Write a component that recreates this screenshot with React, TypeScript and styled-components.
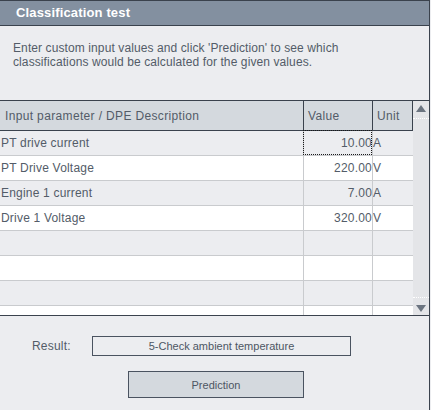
import React from 'react';
import styled, { createGlobalStyle } from 'styled-components';

const GlobalStyle = createGlobalStyle`
  html, body {
    margin: 0;
    padding: 0;
    background: #ecedf0;
  }
  body {
    font-family: "Liberation Sans", Arial, sans-serif;
    color: #4d5663;
  }
`;

type Row = { name: string; value: string; unit: string };

const rows: Row[] = [
  { name: 'PT drive current', value: '10.00', unit: 'A' },
  { name: 'PT Drive Voltage', value: '220.00', unit: 'V' },
  { name: 'Engine 1 current', value: '7.00', unit: 'A' },
  { name: 'Drive 1 Voltage', value: '320.00', unit: 'V' },
  { name: '', value: '', unit: '' },
  { name: '', value: '', unit: '' },
  { name: '', value: '', unit: '' },
  { name: '', value: '', unit: '' },
];

export default function App() {
  return (
    <>
      <GlobalStyle />
      <Panel>
        <TitleBar>Classification test</TitleBar>
        <Description>
          Enter custom input values and click 'Prediction' to see which
          <br />
          classifications would be calculated for the given values.
        </Description>

        <Table>
          <Grid>
            <HeadCell>Input parameter / DPE Description</HeadCell>
            <HeadCell>Value</HeadCell>
            <HeadCell>Unit</HeadCell>
            {rows.map((row, i) => (
              <React.Fragment key={i}>
                <Cell odd={i % 2 === 0}>{row.name}</Cell>
                <ValueCell odd={i % 2 === 0} focused={i === 0}>
                  {row.value}
                </ValueCell>
                <UnitCell odd={i % 2 === 0}>{row.unit}</UnitCell>
              </React.Fragment>
            ))}
          </Grid>
          <ScrollBar>
            <ArrowBtn>
              <svg width="10" height="7" viewBox="0 0 10 7">
                <polygon points="5,0 10,7 0,7" fill="#6b7480" />
              </svg>
            </ArrowBtn>
            <ArrowBtn bottom>
              <svg width="10" height="7" viewBox="0 0 10 7">
                <polygon points="0,0 10,0 5,7" fill="#6b7480" />
              </svg>
            </ArrowBtn>
          </ScrollBar>
        </Table>

        <ResultRow>
          <ResultLabel>Result:</ResultLabel>
          <ResultBox>5-Check ambient temperature</ResultBox>
        </ResultRow>
        <ButtonRow>
          <PredictButton>Prediction</PredictButton>
        </ButtonRow>
      </Panel>
    </>
  );
}

const Panel = styled.div`
  width: 429px;
  height: 410px;
  border-right: 1px solid #3a424d;
  background: #ecedf0;
  display: flex;
  flex-direction: column;
`;

const TitleBar = styled.div`
  height: 24px;
  border-top: 1px solid #3a424d;
  border-bottom: 1px solid #3a424d;
  background: #8390a0;
  color: #ffffff;
  font-weight: bold;
  font-size: 13px;
  line-height: 24px;
  padding-left: 16px;
  letter-spacing: 0.15px;
`;

const Description = styled.div`
  margin-top: 15px;
  padding-left: 13px;
  font-size: 12px;
  line-height: 14px;
  letter-spacing: 0.1px;
  color: #535c68;
`;

const Table = styled.div`
  margin-top: 31px;
  height: 214px;
  border-top: 1px solid #3a424d;
  border-bottom: 1px solid #3a424d;
  display: flex;
  overflow: hidden;
`;

const Grid = styled.div`
  display: grid;
  grid-template-columns: 304px 69px 40px;
  grid-auto-rows: 25px;
  grid-template-rows: 30px;
  align-content: start;
  width: 413px;
`;

const HeadCell = styled.div`
  background: #d4d9de;
  border-bottom: 1px solid #3a424d;
  border-right: 1px solid #3a424d;
  font-size: 12px;
  letter-spacing: 0.35px;
  color: #535c68;
  display: flex;
  align-items: center;
  padding-left: 4px;
  &:first-child {
    padding-left: 5px;
  }
`;

const Cell = styled.div<{ odd: boolean }>`
  background: ${({ odd }) => (odd ? '#ecedf0' : '#ffffff')};
  border-bottom: 1px solid #c9cbce;
  border-right: 1px solid #c9cbce;
  font-size: 12px;
  letter-spacing: 0.2px;
  color: #535c68;
  display: flex;
  align-items: center;
  padding-left: 1px;
  white-space: nowrap;
`;

const ValueCell = styled(Cell)<{ focused?: boolean }>`
  justify-content: flex-end;
  padding-left: 0;
  padding-right: 0;
  position: relative;
  &::after {
    content: '';
    display: ${({ focused }) => (focused ? 'block' : 'none')};
    position: absolute;
    left: -1px;
    top: -1px;
    right: 0;
    bottom: 0;
    border: 1px dotted #1a1a1a;
  }
`;

const UnitCell = styled(Cell)`
  border-right: none;
  padding-left: 0;
`;

const ScrollBar = styled.div`
  width: 16px;
  background: #e4e5e8;
  display: flex;
  flex-direction: column;
  justify-content: space-between;
`;

const ArrowBtn = styled.div<{ bottom?: boolean }>`
  height: 18px;
  display: flex;
  justify-content: center;
  align-items: ${({ bottom }) => (bottom ? 'flex-end' : 'flex-start')};
  padding: ${({ bottom }) => (bottom ? '0 0 3px' : '4px 0 0')};
  box-sizing: border-box;
  border-${({ bottom }) => (bottom ? 'top' : 'bottom')}: 1px dotted #ffffff;
`;

const ResultRow = styled.div`
  margin-top: 20px;
  display: flex;
  align-items: center;
  padding-left: 32px;
`;

const ResultLabel = styled.div`
  width: 60px;
  font-size: 12px;
  letter-spacing: 0.2px;
  color: #535c68;
`;

const ResultBox = styled.div`
  width: 257px;
  height: 18px;
  border: 1px solid #4a5360;
  font-size: 11px;
  color: #4d5663;
  display: flex;
  align-items: center;
  justify-content: center;
`;

const ButtonRow = styled.div`
  margin-top: 15px;
  padding-left: 128px;
`;

const PredictButton = styled.div`
  width: 174px;
  height: 25px;
  border: 1px solid #4a5360;
  background: #d4d9de;
  font-size: 11px;
  color: #4d5663;
  display: flex;
  align-items: center;
  justify-content: center;
`;
